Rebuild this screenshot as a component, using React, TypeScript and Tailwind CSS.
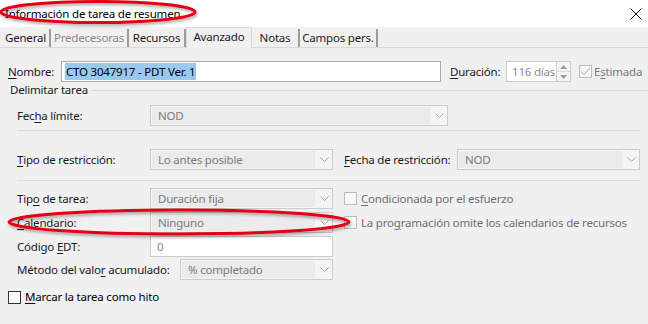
import { ReactNode } from 'react';

const Chevron = () => (
  <svg width="9" height="6" viewBox="0 0 9 6" className="block">
    <polyline points="0.5,0.5 4.5,4.5 8.5,0.5" fill="none" stroke="#a8a8a8" strokeWidth="1" />
  </svg>
);

const Combo = ({ value, w }: { value: string; w: string }) => (
  <div className={`${w} flex h-[21px] shrink-0 items-stretch border border-[#cccccc] bg-[#f4f4f4]`}>
    <div className="m-[1px] flex flex-1 items-center bg-[#ebebeb] pl-[6px] text-[#7a7a7a]">{value}</div>
    <div className="flex w-[16px] items-center justify-center">
      <Chevron />
    </div>
  </div>
);

const Box = ({ checked, dark }: { checked?: boolean; dark?: boolean }) => (
  <div
    className={`flex h-[13px] w-[13px] items-center justify-center border ${
      dark ? 'border-[#333333] bg-white' : 'border-[#bcbcbc] bg-[#f7f7f7]'
    }`}
  >
    {checked && (
      <svg width="11" height="9" viewBox="0 0 11 9">
        <polyline points="1,4.5 4,7.5 10,1" fill="none" stroke="#c4c4c4" strokeWidth="1.2" />
      </svg>
    )}
  </div>
);

const Label = ({ children, w }: { children: ReactNode; w: string }) => (
  <div className={`${w} shrink-0 text-[#1a1a1a]`}>{children}</div>
);

const Tab = ({ label, w, muted, active }: { label: string; w: string; muted?: boolean; active?: boolean }) =>
  active ? (
    <div className={`${w} -mb-px flex h-[21px] shrink-0 items-start justify-center border-x border-t border-[#d9d9d9] bg-[#f0f0f0] pt-[3px]`}>
      {label}
    </div>
  ) : (
    <div
      className={`${w} flex h-[18px] shrink-0 items-center justify-center border-r-2 border-[#9c9c9c] bg-[#f0f0f0] ${
        muted ? 'text-[#8a8a8a]' : 'text-[#1a1a1a]'
      }`}
    >
      {label}
    </div>
  );

export default function App() {
  return (
    <div
      className="relative h-[324px] w-[648px] overflow-hidden whitespace-nowrap bg-[#f0f0f0] text-[11.5px] leading-none tracking-[-0.2px] text-[#1a1a1a]"
      style={{ fontFamily: '"Noto Sans", "Segoe UI", sans-serif' }}
    >
      {/* title bar */}
      <div className="flex h-[27px] items-center justify-between bg-white pl-[5px] pr-[5px]">
        <span className="text-[11.5px] text-black">Información de tarea de resumen</span>
        <svg width="12" height="12" viewBox="0 0 12 12" className="mr-[1px]">
          <path d="M0.5 0.5 L11.5 11.5 M11.5 0.5 L0.5 11.5" stroke="#111" strokeWidth="1" />
        </svg>
      </div>

      {/* tabs */}
      <div className="flex h-[21px] items-end border-b border-[#d9d9d9] pl-[2px]">
        <Tab label="General" w="w-[49px]" />
        <Tab label="Predecesoras" w="w-[78px]" muted />
        <Tab label="Recursos" w="w-[57px]" />
        <Tab label="Avanzado" w="w-[66px]" active />
        <Tab label="Notas" w="w-[48px]" />
        <Tab label="Campos pers." w="w-[78px]" />
      </div>

      {/* nombre row */}
      <div className="mt-[13px] flex h-[21px] items-center pl-[8px]">
        <Label w="w-[53px]">
          <u className="underline-offset-2">N</u>ombre:
        </Label>
        <div className="flex h-[21px] w-[380px] shrink-0 items-center border border-[#a9a9a9] bg-white pl-[3px]">
          <span className="bg-[#99c9ef] px-[1px] py-[3px] text-black">CTO 3047917 - PDT Ver. 1</span>
        </div>
        <div className="ml-[9px] w-[56px] shrink-0">
          <u className="underline-offset-2">D</u>uración:
        </div>
        <div className="flex h-[21px] w-[51px] shrink-0 items-center overflow-hidden border border-[#cccccc] bg-white pl-[5px] text-[#8a8a8a]">
          116 días
        </div>
        <div className="flex h-[21px] w-[14px] shrink-0 flex-col border-y border-r border-[#cccccc] bg-[#f4f4f4]">
          <div className="flex flex-1 items-center justify-center border-b border-[#dcdcdc]">
            <svg width="7" height="4" viewBox="0 0 7 4">
              <polygon points="0,4 3.5,0 7,4" fill="#9a9a9a" />
            </svg>
          </div>
          <div className="flex flex-1 items-center justify-center">
            <svg width="7" height="4" viewBox="0 0 7 4">
              <polygon points="0,0 3.5,4 7,0" fill="#9a9a9a" />
            </svg>
          </div>
        </div>
        <div className="ml-[8px] shrink-0">
          <Box checked />
        </div>
        <span className="ml-[2px] text-[#7a7a7a]">
          E<u className="underline-offset-2">s</u>timada
        </span>
      </div>

      {/* group header */}
      <div className="flex h-[16px] items-center pl-[10px]">
        <span>Delimitar tarea</span>
        <div className="ml-[4px] h-px flex-1 bg-[#dcdcdc]" />
      </div>

      <div className="mt-[7px] flex h-[21px] items-center pl-[17px]">
        <Label w="w-[133px]">
          Fec<u className="underline-offset-2">h</u>a límite:
        </Label>
        <Combo value="NOD" w="w-[298px]" />
      </div>

      <div className="ml-[17px] mr-[8px] mt-[4px] h-px bg-[#dcdcdc]" />

      <div className="mt-[18px] flex h-[21px] items-center pl-[17px]">
        <Label w="w-[133px]">
          <u className="underline-offset-2">T</u>ipo de restricción:
        </Label>
        <Combo value="Lo antes posible" w="w-[183px]" />
        <Label w="ml-[11px] w-[113px]">
          <u className="underline-offset-2">F</u>echa de restricción:
        </Label>
        <Combo value="NOD" w="w-[183px]" />
      </div>

      <div className="ml-[17px] mr-[8px] mt-[10px] h-px bg-[#dcdcdc]" />

      <div className="mt-[7px] flex h-[21px] items-center pl-[17px]">
        <Label w="w-[133px]">
          Tip<u className="underline-offset-2">o</u> de tarea:
        </Label>
        <Combo value="Duración fija" w="w-[183px]" />
        <div className="ml-[11px] shrink-0">
          <Box />
        </div>
        <span className="ml-[4px] text-[#6e6e78]">
          <u className="underline-offset-2">C</u>ondicionada por el esfuerzo
        </span>
      </div>

      <div className="mt-[3px] flex h-[21px] items-center pl-[17px]">
        <Label w="w-[133px]">
          <u className="underline-offset-2">C</u>alendario:
        </Label>
        <Combo value="Ninguno" w="w-[183px]" />
        <div className="ml-[11px] shrink-0">
          <Box />
        </div>
        <span className="ml-[4px] text-[#6e6e78]">
          La pro<u className="underline-offset-2">g</u>ramación omite los calendarios de recursos
        </span>
      </div>

      <div className="mt-[3px] flex h-[21px] items-center pl-[17px]">
        <Label w="w-[133px]">
          Código <u className="underline-offset-2">E</u>DT:
        </Label>
        <div className="flex h-[21px] w-[183px] shrink-0 items-center border border-[#cccccc] bg-white pl-[6px] text-[#8a8a8a]">
          0
        </div>
      </div>

      <div className="mt-[2px] flex h-[21px] items-center pl-[17px]">
        <Label w="w-[163px]">
          Método del valo<u className="underline-offset-2">r</u> acumulado:
        </Label>
        <Combo value="% completado" w="w-[153px]" />
      </div>

      <div className="mt-[10px] flex h-[14px] items-center pl-[8px]">
        <Box dark />
        <span className="ml-[4px] text-black">
          <u className="underline-offset-2">M</u>arcar la tarea como hito
        </span>
      </div>

      {/* red highlight ellipses drawn over the dialog */}
      <svg className="pointer-events-none absolute left-0 top-0" width="648" height="324">
        <defs>
          <filter id="sh" x="-10%" y="-50%" width="120%" height="200%">
            <feDropShadow dx="1" dy="2" stdDeviation="1.5" floodColor="#000" floodOpacity="0.35" />
          </filter>
        </defs>
        <ellipse cx="98" cy="12" rx="97" ry="10.5" fill="none" stroke="#e30613" strokeWidth="3" filter="url(#sh)" />
        <ellipse cx="179" cy="222" rx="170" ry="12" fill="none" stroke="#e30613" strokeWidth="3" filter="url(#sh)" />
      </svg>
    </div>
  );
}
